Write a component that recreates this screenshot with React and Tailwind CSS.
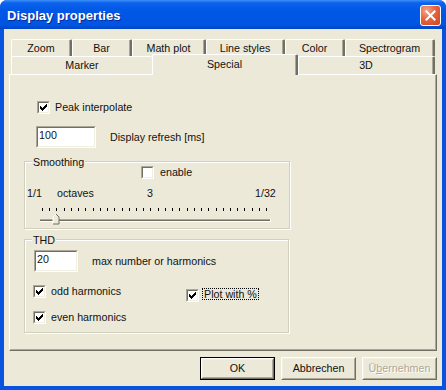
import React from "react";

const Check = () => (
  <svg width="7" height="7" viewBox="0 0 7 7" shapeRendering="crispEdges" fill="#000">
    <rect x="0" y="2" width="1" height="3" />
    <rect x="1" y="3" width="1" height="3" />
    <rect x="2" y="4" width="1" height="3" />
    <rect x="3" y="3" width="1" height="3" />
    <rect x="4" y="2" width="1" height="3" />
    <rect x="5" y="1" width="1" height="3" />
    <rect x="6" y="0" width="1" height="3" />
  </svg>
);

const Sunken = ({ className, children }) => (
  <div className={`border border-t-[#aca899] border-l-[#aca899] border-r-white border-b-white ${className}`}>
    <div className="w-full h-full border border-t-[#716f64] border-l-[#716f64] border-r-[#f1efe2] border-b-[#f1efe2] bg-white">
      {children}
    </div>
  </div>
);

const CheckBox = ({ checked }) => (
  <Sunken className="w-[13px] h-[13px] shrink-0">
    <div className="w-full h-full flex items-center justify-center">{checked && <Check />}</div>
  </Sunken>
);

const Edit = ({ value, className }) => (
  <Sunken className={className}>
    <div className="pl-[1px] pt-[1px]">{value}</div>
  </Sunken>
);

const Button = ({ children, def, disabled }) => {
  const inner = (
    <div className="w-full h-full border border-t-white border-l-white border-r-[#716f64] border-b-[#716f64]">
      <div className="w-full h-full border border-t-[#f1efe2] border-l-[#f1efe2] border-r-[#aca899] border-b-[#aca899] flex items-center justify-center">
        {children}
      </div>
    </div>
  );
  return (
    <div
      className={`w-[75px] h-[23px] ${def ? "border border-black" : ""} ${
        disabled ? "text-[#aca899] [text-shadow:1px_1px_0_#fff]" : ""
      }`}
    >
      {inner}
    </div>
  );
};

const Tab = ({ label, w, last }) => (
  <div
    className={`h-full flex items-center justify-center bg-[#ece9d8] border-t border-l border-t-white border-l-white rounded-t-[2px] ${
      last === "none" ? "" : "border-r-2 border-r-[#716f64] shadow-[inset_-1px_0_0_#aca899]"
    }`}
    style={{ width: w }}
  >
    {label}
  </div>
);

const Group = ({ title, className, children }) => (
  <div
    className={`relative border border-[#d0d0bf] shadow-[inset_1px_1px_0_#fff,1px_1px_0_#fff] ${className}`}
  >
    <span className="absolute left-[7px] top-[-6px] px-[1px] bg-[#ece9d8]">{title}</span>
    {children}
  </div>
);

const Slider = () => {
  const ticks = Array.from({ length: 32 }, (_, i) => Math.round(4 + i * 7.23));
  const cx = ticks[2];
  return (
    <svg width="234" height="20" viewBox="0 0 234 20" shapeRendering="crispEdges">
      {ticks.map((x, i) => (
        <rect key={i} x={x} y="3" width="1" height="3" fill="#000" />
      ))}
      <rect x="2" y="14" width="230" height="1" fill="#aca899" />
      <rect x="2" y="15" width="230" height="1" fill="#716f64" />
      <rect x="2" y="16" width="231" height="1" fill="#fff" />
      <rect x="232" y="14" width="1" height="3" fill="#fff" />
      <polygon
        points={`${cx - 3},19 ${cx - 3},12 ${cx},9 ${cx + 3},12 ${cx + 3},19`}
        fill="#ece9d8"
      />
      <path d={`M${cx - 3} 19 V12 L${cx} 9`} stroke="#fff" fill="none" strokeWidth="1" shapeRendering="auto" />
      <path d={`M${cx} 9 L${cx + 3} 12 V19 H${cx - 3}`} stroke="#716f64" fill="none" strokeWidth="1" shapeRendering="auto" />
    </svg>
  );
};

export default function App() {
  return (
    <div className="w-[446px] h-[390px] [font-family:'Liberation_Sans',Arial,sans-serif] text-[10.7px] leading-[13px] text-[#111] bg-white">
      <div className="w-full h-full flex flex-col rounded-t-[7px] overflow-hidden bg-[#0853e0]">
        {/* title bar */}
        <div className="h-[29px] shrink-0 flex items-center justify-between pl-[7px] pr-[5px] bg-[linear-gradient(180deg,#3d8ff6_0%,#0c62ec_10%,#0058e6_35%,#0055e3_85%,#0045c6_100%)]">
          <span className="pt-[2px] text-white font-bold text-[13px] leading-[16px] [text-shadow:1px_1px_0_#0a2a9a]">
            Display properties
          </span>
          <div className="mt-[2px] w-[21px] h-[21px] rounded-[3px] border border-white bg-[radial-gradient(circle_at_30%_25%,#f4a58a_0%,#e6643f_45%,#cc4520_100%)] flex items-center justify-center">
            <svg width="11" height="11" viewBox="0 0 11 11">
              <path d="M1.5 1.5 L9.5 9.5 M9.5 1.5 L1.5 9.5" stroke="#fff" strokeWidth="2" strokeLinecap="square" />
            </svg>
          </div>
        </div>

        {/* body */}
        <div className="flex-1 mx-[4px] mb-[4px] bg-[#ece9d8] pl-[5px] pt-[10px] flex flex-col">
          {/* tabs */}
          <div className="relative z-10 ml-[2px] w-[424px]">
            <div className="flex h-[17px]">
              <Tab label="Zoom" w={61} />
              <Tab label="Bar" w={60} />
              <Tab label="Math plot" w={74} />
              <Tab label="Line styles" w={79} />
              <Tab label="Color" w={60} />
              <Tab label="Spectrogram" w={90} />
            </div>
            <div className="flex h-[18px]">
              <Tab label="Marker" w={141} last="none" />
              <div className="relative z-10 -mt-[2px] h-[21px] w-[146px] pb-[2px] flex items-center justify-center bg-[#ece9d8] border-t border-l border-t-white border-l-white border-r-2 border-r-[#716f64] shadow-[inset_-1px_0_0_#aca899] rounded-t-[2px]">
                Special
              </div>
              <Tab label="3D" w={137} />
            </div>
          </div>

          {/* panel */}
          <div className="w-[428px] h-[277px] shrink-0 border border-t-white border-l-white border-r-[#716f64] border-b-[#716f64] shadow-[inset_-1px_-1px_0_#aca899] flex flex-col">
            <div className="mt-[26px] ml-[27px] flex items-center gap-[5px]">
              <CheckBox checked />
              <span>Peak interpolate</span>
            </div>

            <div className="mt-[12px] ml-[26px] flex items-center gap-[14px]">
              <Edit value="100" className="w-[60px] h-[22px]" />
              <span>Display refresh [ms]</span>
            </div>

            <Group title="Smoothing" className="mt-[13px] ml-[14px] w-[266px] h-[68px] flex flex-col">
              <div className="mt-[4px] ml-[116px] flex items-center gap-[6px]">
                <CheckBox />
                <span>enable</span>
              </div>
              <div className="mt-[8px] flex">
                <span className="ml-[2px] w-[30px]">1/1</span>
                <span className="w-[90px]">octaves</span>
                <span className="w-[108px]">3</span>
                <span>1/32</span>
              </div>
              <div className="mt-[5px] ml-[13px] flex">
                <Slider />
              </div>
            </Group>

            <Group title="THD" className="mt-[10px] ml-[14px] w-[265px] h-[94px] flex flex-col">
              <div className="mt-[10px] ml-[9px] flex items-center gap-[14px]">
                <Edit value="20" className="w-[44px] h-[22px]" />
                <span>max number or harmonics</span>
              </div>
              <div className="mt-[13px] ml-[8px] flex items-start">
                <div className="w-[153px] flex items-center gap-[5px]">
                  <CheckBox checked />
                  <span>odd harmonics</span>
                </div>
                <div className="mt-[4px] flex items-start gap-[3px]">
                  <CheckBox checked />
                  <span className="-mt-[1px] h-[12px] leading-[10px] px-[1px] border border-dotted border-black">
                    Plot with %
                  </span>
                </div>
              </div>
              <div className="mt-[9px] ml-[8px] flex items-center gap-[5px]">
                <CheckBox checked />
                <span>even harmonics</span>
              </div>
            </Group>
          </div>

          {/* buttons */}
          <div className="mt-[6px] w-[428px] flex justify-end gap-[6px]">
            <Button def>OK</Button>
            <Button>Abbrechen</Button>
            <Button disabled>
              <span>
                Ü<u>b</u>ernehmen
              </span>
            </Button>
          </div>
        </div>
      </div>
    </div>
  );
}
